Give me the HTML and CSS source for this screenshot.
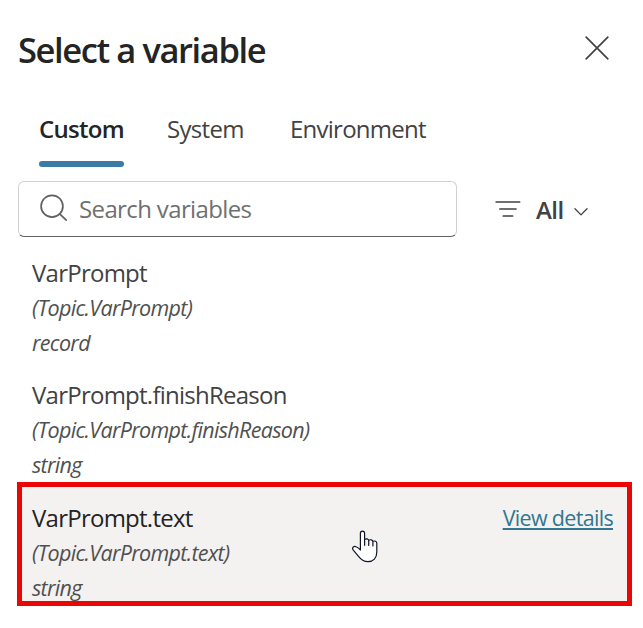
FILE: index.html
```html
<!DOCTYPE html>
<html lang="en">
<head>
<meta charset="utf-8">
<title>Select a variable</title>
<link rel="stylesheet" href="styles.css">
</head>
<body>
<main class="panel">
  <header class="header">
    <h1 class="title">Select a variable</h1>
    <button class="close" aria-label="Close">
      <svg width="24" height="24" viewBox="0 0 24 24"><path d="M1.2 1.2 22.8 22.8M22.8 1.2 1.2 22.8"/></svg>
    </button>
  </header>
  <nav class="tabs">
    <a class="tab tab-custom active"><span>Custom</span></a>
    <a class="tab tab-system"><span>System</span></a>
    <a class="tab tab-environment"><span>Environment</span></a>
  </nav>
  <div class="toolbar">
    <div class="search">
      <svg class="search-icon" width="28" height="28" viewBox="0 0 28 28"><circle cx="12" cy="12.2" r="10.9"/><path d="M19.7 19.9 26.2 26.2"/></svg>
      <span class="placeholder">Search variables</span>
    </div>
    <button class="filter">
      <svg class="filter-icon" width="26" height="18" viewBox="0 0 26 18"><path d="M1.2 2H24.6M4.9 9H21M8.3 16H17.6"/></svg>
      <span class="filter-label">All</span>
      <svg class="chevron" width="14" height="8" viewBox="0 0 14 8"><path d="M1 .8 7 6.9 13 .8"/></svg>
    </button>
  </div>
  <section class="list">
    <article class="item">
      <div class="name">VarPrompt</div>
      <div class="path">(Topic.VarPrompt)</div>
      <div class="type">record</div>
    </article>
    <article class="item">
      <div class="name">VarPrompt.finishReason</div>
      <div class="path">(Topic.VarPrompt.finishReason)</div>
      <div class="type">string</div>
    </article>
    <article class="item selected">
      <div class="details">
        <div class="name">VarPrompt.text</div>
        <div class="path">(Topic.VarPrompt.text)</div>
        <div class="type">string</div>
      </div>
      <a class="link">View details</a>
      <svg class="cursor" width="26" height="33" viewBox="0 0 26 33"><path d="M8.4 20V3.2C8.4.3 12.6.3 12.6 3.2V15.2M12.6 9.5C14 8.2 16.7 8.9 16.7 10.8V15.5M16.7 10.3C18.3 9.2 20.9 9.9 20.9 11.9V16M20.9 11.4C22.7 10.4 24.8 11.5 24.8 13.2V22C24.8 28.2 21.3 31.7 16 31.7C11.5 31.7 9.2 29.7 6.7 26.6L1.3 20.1C-.4 17.7 1.7 15.9 4 16.7C5.8 17.4 7.3 18.5 8.4 20"/></svg>
    </article>
  </section>
</main>
</body>
</html>
```
FILE: styles.css
```css
* { box-sizing: border-box; }
body {
  margin: 0;
  background: #fff;
  color: #424242;
  font-family: "Open Sans", "Noto Sans", sans-serif;
  font-size: 24px;
}
svg { display: block; fill: none; stroke: #424242; stroke-width: 1.7; stroke-linecap: round; stroke-linejoin: round; }
button { border: 0; padding: 0; background: none; color: inherit; font: inherit; }
.panel { width: 643px; height: 628px; padding: 25px 11px 0 18px; overflow: hidden; }
.header { display: flex; align-items: center; justify-content: space-between; height: 48px; padding-right: 23px; }
.title { margin: 2px 0 0; color: #242424; font-size: 34.5px; font-weight: 600; line-height: 48px; letter-spacing: -1.4px; white-space: nowrap; }
.close { margin-top: -2px; }
.tabs { display: flex; gap: 43px; height: 56px; margin: 38px 0 0 21px; }
.tab { height: 56px; line-height: 35px; white-space: nowrap; }
.tab-custom { width: 85px; letter-spacing: -0.7px; }
.tab-system { width: 80px; letter-spacing: -0.7px; }
.tab-environment { letter-spacing: -0.75px; }
.active { display: flex; flex-direction: column; justify-content: space-between; color: #242424; font-weight: 600; }
.active::after { content: ""; height: 6px; border-radius: 3px; background: #3a7ca5; }
.toolbar { display: flex; align-items: center; margin-top: 14px; }
.search { display: flex; align-items: center; width: 439px; height: 56px; padding-left: 21px; border: 1px solid #d1d1d1; border-bottom-color: #616161; border-radius: 6px; }
.search-icon { margin-top: -3px; stroke: #616161; }
.placeholder { margin: -2px 0 0 11px; color: #707070; letter-spacing: -0.63px; white-space: nowrap; }
.filter { display: flex; align-items: center; margin-left: 38px; font-weight: 600; }
.filter-label { margin: 1px 0 0 15px; width: 30px; letter-spacing: -0.5px; text-align: left; }
.chevron { margin: 5px 0 0 8px; stroke-width: 1.3; }
.list { margin-top: 18px; }
.item { height: 122px; padding-left: 14px; white-space: nowrap; }
.name { line-height: 36px; letter-spacing: -0.75px; }
.path, .type { height: 35px; color: #505050; font-size: 21.5px; font-style: italic; line-height: 34px; letter-spacing: -0.67px; }
.selected { position: relative; display: flex; justify-content: space-between; width: 615px; height: 124px; margin: -17px 0 0 -1px; padding: 13px 14px 0 10px; border: 5px solid #eb0606; background: #f3f2f1; overflow: hidden; }
.selected .name { color: #242424; }
.link { height: 30px; margin-top: 3px; color: #32768f; font-size: 21.5px; line-height: 30px; letter-spacing: -0.68px; text-decoration: underline; text-decoration-thickness: 2px; text-underline-offset: 2px; }
.cursor { position: absolute; left: 330px; top: 43px; fill: #fff; stroke: #101426; stroke-width: 1.2; }
```
